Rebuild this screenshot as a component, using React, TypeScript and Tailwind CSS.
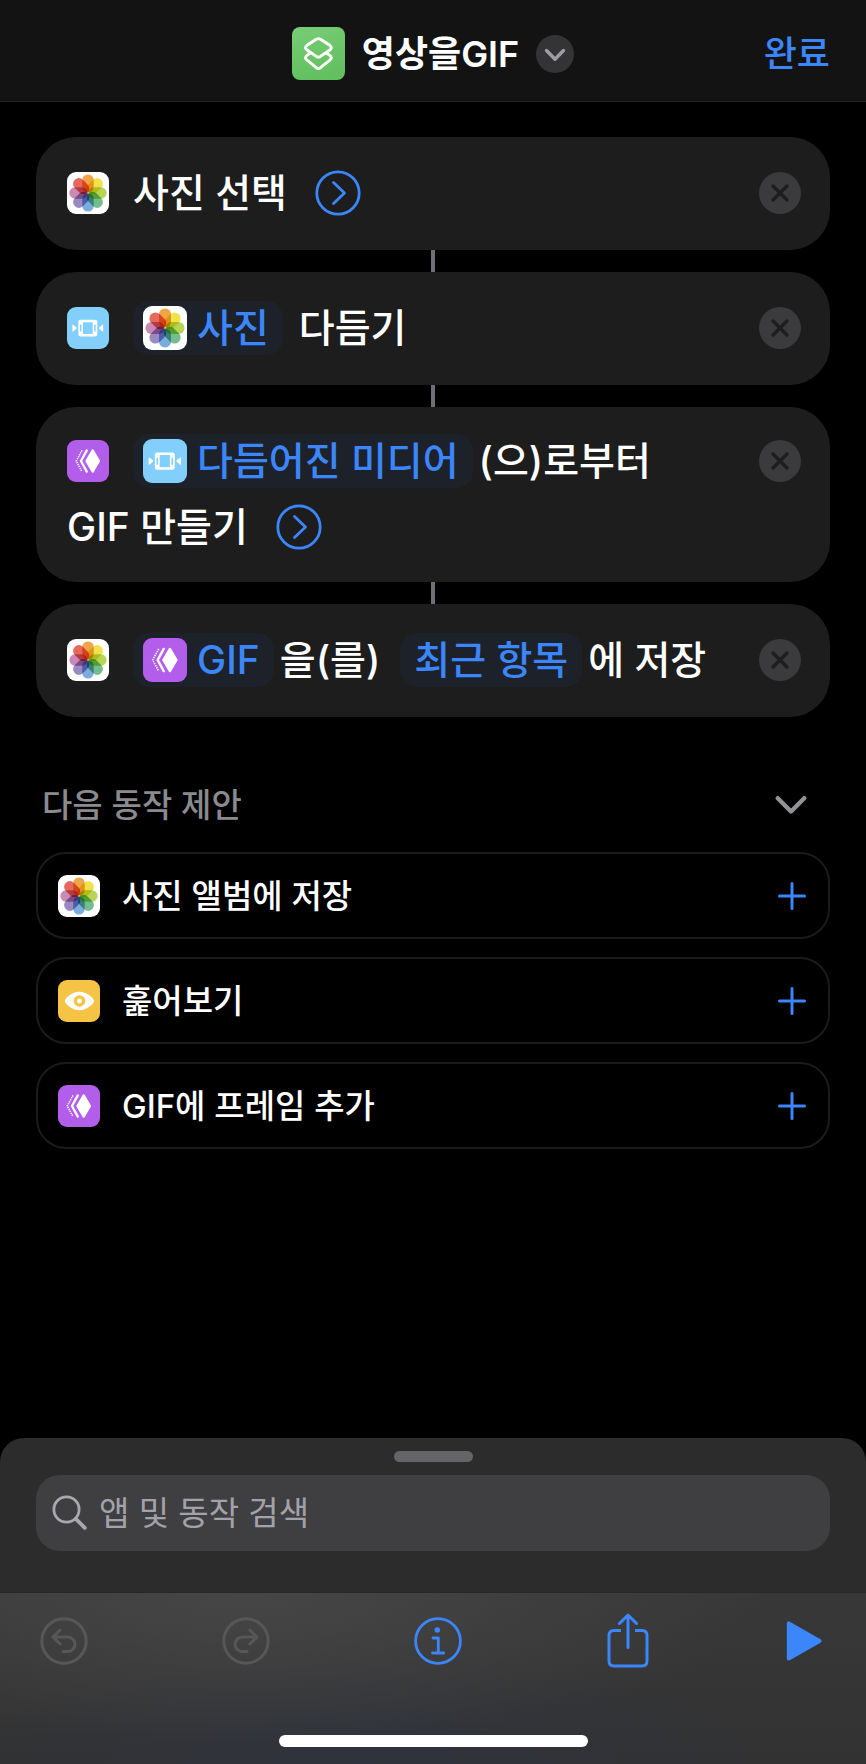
import { ReactNode } from 'react'
import clsx from 'clsx'

type IconName = 'photos' | 'trim' | 'gif' | 'eye'

const PETALS = [
  '#f0a548',
  '#f1e24c',
  '#b9d558',
  '#74bd8e',
  '#7aacdd',
  '#9b89c2',
  '#cb8ab6',
  '#e5695c',
]

const PhotosArt = () => (
  <svg viewBox="0 0 42 42" className="isolate size-full" aria-hidden="true">
    <rect width="42" height="42" fill="#fff" />
    {PETALS.map((color, i) => (
      <rect
        key={color}
        className="mix-blend-multiply"
        x="15.3"
        y="2.4"
        width="11.4"
        height="18"
        rx="5.5"
        fill={color}
        transform={`rotate(${i * 45} 21 21)`}
      />
    ))}
  </svg>
)

const TrimArt = () => (
  <svg viewBox="0 0 42 42" className="size-full" aria-hidden="true">
    <rect width="42" height="42" fill="#82cffc" />
    <rect x="11.3" y="12.8" width="19" height="16.6" rx="2.4" fill="#fff" />
    <rect x="15.9" y="15.3" width="9.8" height="11.6" fill="#82cffc" />
    <rect x="12.9" y="17.6" width="1.5" height="7" rx="0.6" fill="#82cffc" />
    <rect x="27.2" y="17.6" width="1.500" height="7" rx="0.6" fill="#82cffc" />
    <path d="M5.400 18.100v6q0 .8.700.4l3.300-2.700q.5-.7 0-1.400l-3.300-2.700q-.7-.4-.7.4z" fill="#fff" />
    <path d="M36.200 18.100v6q0 .8-.7.4l-3.300-2.700q-.5-.7 0-1.400l3.300-2.700q.7-.4.7.4z" fill="#fff" />
  </svg>
)

const GifArt = () => (
  <svg viewBox="0 0 42 42" className="size-full" aria-hidden="true">
    <rect width="42" height="42" fill="#b35eea" />
    <path
      d="M25.7 10.4 32 21l-6.3 10.6L19.4 21z"
      fill="#fff"
      stroke="#fff"
      strokeWidth="2.2"
      strokeLinejoin="round"
    />
    <path
      d="M19.8 10.4 14 21l5.8 10.6"
      fill="none"
      stroke="#fff"
      strokeWidth="2.3"
      strokeLinecap="round"
      strokeLinejoin="round"
    />
    <path
      d="M15 10.4 9.2 21 15 31.6"
      fill="none"
      stroke="#fff"
      strokeWidth="1.5"
      strokeDasharray="1.3 0.9"
    />
  </svg>
)

const EyeArt = () => (
  <svg viewBox="0 0 42 42" className="size-full" aria-hidden="true">
    <rect width="42" height="42" fill="#f6c445" />
    <path
      d="M6.8 21c0-1.6 6-9.200 14.600-9.200S36.200 19.400 36.200 21s-6.200 9.300-14.800 9.300S6.800 22.600 6.800 21z"
      fill="#fff"
    />
    <circle cx="21.5" cy="21" r="4.1" fill="#fff" stroke="#f6c445" strokeWidth="3.4" />
  </svg>
)

const ART: Record<IconName, ReactNode> = {
  photos: <PhotosArt />,
  trim: <TrimArt />,
  gif: <GifArt />,
  eye: <EyeArt />,
}

const AppIcon = ({ name, className }: { name: IconName; className?: string }) => (
  <span className={clsx('block shrink-0 overflow-hidden rounded-[9px]', className)}>
    {ART[name]}
  </span>
)

const Chip = ({ icon, children }: { icon?: IconName; children: ReactNode }) => (
  <button
    type="button"
    className={clsx(
      'mr-1.5 flex h-[54px] items-center rounded-2xl bg-[#1c212a] pr-3.5 text-[#3b86fb]',
      icon ? 'gap-2.5 pl-2.5' : 'pl-3.5',
    )}
  >
    {icon && <AppIcon name={icon} className="size-11" />}
    {children}
  </button>
)

const ExpandButton = () => (
  <button type="button" aria-label="더 보기" className="ml-7 text-[#3b86fb]">
    <svg
      viewBox="0 0 46 46"
      className="size-[46px]"
      fill="none"
      stroke="currentColor"
      strokeWidth="2.8"
      strokeLinecap="round"
      strokeLinejoin="round"
    >
      <circle cx="23" cy="23" r="21.2" />
      <path d="M18.5 12.5 29.5 23l-11 10.5" />
    </svg>
  </button>
)

const ActionCard = ({ icon, children }: { icon: IconName; children: ReactNode }) => (
  <li className="group">
    <div className="flex min-h-[113px] items-center rounded-[40px] bg-[#1d1d1d] pt-[21px] pr-[29px] pb-[22px] pl-[31px]">
      <div className="flex w-full items-start gap-10">
        <div className="flex min-w-0 flex-1 flex-wrap items-center text-[39px] leading-[66px] font-medium text-white">
          <AppIcon name={icon} className="mr-6 size-[42px]" />
          {children}
        </div>
        <button type="button" aria-label="삭제" className="flex h-[66px] items-center">
          <svg viewBox="0 0 42 42" className="size-[42px]">
            <circle cx="21" cy="21" r="21" fill="#3b3b3d" />
            <path
              d="m14 14 14 14M28 14 14 28"
              stroke="#1d1d1d"
              strokeWidth="3.4"
              strokeLinecap="round"
            />
          </svg>
        </button>
      </div>
    </div>
    <div className="mx-auto h-[22px] w-1 bg-[#706f77] group-last:hidden" />
  </li>
)

const suggestions: { icon: IconName; label: string }[] = [
  { icon: 'photos', label: '사진 앨범에 저장' },
  { icon: 'eye', label: '훑어보기' },
  { icon: 'gif', label: 'GIF에 프레임 추가' },
]

const Header = () => (
  <header className="grid h-[102px] grid-cols-[1fr_auto_1fr] items-center border-b border-[#202020] bg-[#131313] px-9 pt-1.5">
    <span />
    <div className="flex items-center">
      <svg viewBox="0 0 53 53" className="mr-[17px] size-[53px]" aria-hidden="true">
        <defs>
          <linearGradient id="tile" x1="0" y1="0" x2="0.3" y2="1">
            <stop offset="0" stopColor="#78cd76" />
            <stop offset="1" stopColor="#63c060" />
          </linearGradient>
        </defs>
        <rect width="53" height="53" rx="8" fill="url(#tile)" />
        <g fill="none" stroke="#fff" strokeWidth="2.9" strokeLinejoin="round" strokeLinecap="round">
          <path d="M24.3 12.300q2.100-1.300 4.200 0l9.300 6q3 2.300 0 4.700l-9.300 6.400q-2.100 1.300-4.200 0L15 23q-3-2.400 0-4.700z" />
          <path d="M18.300 26 15 28.400q-3 2.400 0 4.700l9.300 7.600q2.100 1.500 4.200 0l9.300-7.600q3-2.300 0-4.700L34.500 26" />
        </g>
      </svg>
      <h1 className="text-[36px] leading-[48px] font-semibold text-white">영상을GIF</h1>
      <button type="button" aria-label="메뉴" className="ml-[17px]">
        <svg viewBox="0 0 38 38" className="size-[38px]">
          <circle cx="19" cy="19" r="19" fill="#343436" />
          <path
            d="m10.500 15.500 8.500 8.800 8.500-8.800"
            fill="none"
            stroke="#9c9ca3"
            strokeWidth="3.4"
            strokeLinecap="round"
            strokeLinejoin="round"
          />
        </svg>
      </button>
    </div>
    <button type="button" className="justify-self-end text-[36px] leading-[48px] font-medium text-[#3b86fb]">
      완료
    </button>
  </header>
)

const Toolbar = () => (
  <nav className="flex items-center justify-between pt-5 pr-[43px] pl-10 text-[#3b86fb]">
    <button type="button" disabled aria-label="실행 취소" className="text-[#575758]">
      <svg viewBox="0 0 48 48" className="size-12" fill="none" stroke="currentColor" strokeWidth="3" strokeLinecap="round" strokeLinejoin="round">
        <circle cx="24" cy="24" r="22.2" />
        <path d="M20.200 13 13 20l7.200 7M13.500 20h14a7.500 7.300 0 0 1 0 14.600h-4.500" />
      </svg>
    </button>
    <button type="button" disabled aria-label="실행 복귀" className="text-[#575758]">
      <svg viewBox="0 0 48 48" className="size-12" fill="none" stroke="currentColor" strokeWidth="3" strokeLinecap="round" strokeLinejoin="round">
        <circle cx="24" cy="24" r="22.2" />
        <path d="M27.800 13 35 20l-7.200 7M34.500 20h-14a7.500 7.300 0 0 0 0 14.600H25" />
      </svg>
    </button>
    <button type="button" aria-label="정보" className="flex w-[68px] justify-center">
      <svg viewBox="0 0 48 48" className="size-12" fill="none" stroke="currentColor" strokeWidth="2.8" strokeLinecap="round" strokeLinejoin="round">
        <circle cx="24" cy="24" r="22.4" />
        <circle cx="23.3" cy="13" r="2.8" fill="currentColor" stroke="none" />
        <path d="M19 21h5.300v15M18.500 36h11.200" />
      </svg>
    </button>
    <button type="button" aria-label="공유" className="flex w-[46px] justify-center">
      <svg viewBox="0 0 42 56" className="h-14 w-[42px]" fill="none" stroke="currentColor" strokeWidth="3" strokeLinecap="round" strokeLinejoin="round">
        <path d="M14 17.500H7Q2 17.500 2 22.500v25.500q0 5 5 5h28q5 0 5-5V22.500Q40 17.500 35 17.500h-7" strokeLinecap="butt" />
        <path d="M21 34.500V3M12.500 10.500 21 2l8.500 8.500" />
      </svg>
    </button>
    <button type="button" aria-label="실행" className="flex w-[38px] justify-center">
      <svg viewBox="0 0 36 42" className="h-[42px] w-9" fill="currentColor" stroke="currentColor" strokeWidth="4" strokeLinejoin="round">
        <path d="M2.800 3.400v35.200L33.500 21z" />
      </svg>
    </button>
  </nav>
)

export default function App() {
  return (
    <div className="flex min-h-screen flex-col bg-black font-['Inter','Noto_Sans_CJK_KR',sans-serif]">
      <Header />

      <main className="px-9 pt-[35px] pb-10">
        <ul>
          <ActionCard icon="photos">
            <span>사진 선택</span>
            <ExpandButton />
          </ActionCard>
          <ActionCard icon="trim">
            <Chip icon="photos">사진</Chip>
            <span className="ml-2.5">다듬기</span>
          </ActionCard>
          <ActionCard icon="gif">
            <Chip icon="trim">다듬어진 미디어</Chip>
            <span>(으)로부터</span>
            <span>GIF 만들기</span>
            <ExpandButton />
          </ActionCard>
          <ActionCard icon="photos">
            <Chip icon="gif">GIF</Chip>
            <span className="mr-5">을(를)</span>
            <Chip>최근 항목</Chip>
            <span>에 저장</span>
          </ActionCard>
        </ul>

        <section className="mt-16">
          <div className="mb-[23px] flex h-12 items-center justify-between pr-[23px] pl-1.5">
            <h2 className="text-[33px] leading-[48px] font-medium text-[#8a8a8f]">다음 동작 제안</h2>
            <button type="button" aria-label="접기">
              <svg viewBox="0 0 32 20" className="h-5 w-8" fill="none" stroke="#939397" strokeWidth="4.4" strokeLinecap="round" strokeLinejoin="round">
                <path d="M2.800 3.200 16 16.500 29.200 3.200" />
              </svg>
            </button>
          </div>
          <ul className="flex flex-col gap-[18px]">
            {suggestions.map((item) => (
              <li key={item.label}>
                <button
                  type="button"
                  className="flex h-[87px] w-full items-center rounded-[30px] border-2 border-[#1b1b1b] pr-[22px] pl-5 text-left"
                >
                  <AppIcon name={item.icon} className="mr-[22px] size-[42px]" />
                  <span className="flex-1 text-[33px] leading-[48px] font-medium text-white">{item.label}</span>
                  <svg viewBox="0 0 28 28" className="size-7" stroke="#3b86fb" strokeWidth="3" strokeLinecap="round">
                    <path d="M14 1.500v25M1.500 14h25" />
                  </svg>
                </button>
              </li>
            ))}
          </ul>
        </section>
      </main>

      <footer className="mt-auto">
        <div className="rounded-t-[24px] bg-[#2c2c2c] px-9 pt-[13px] pb-[41px]">
          <div className="mx-auto mb-[13px] h-[11px] w-[79px] rounded-full bg-[#656469]" />
          <label className="flex h-[76px] items-center gap-[11px] rounded-[24px] bg-[#3f3f41] px-4">
            <svg viewBox="0 0 36 36" className="size-9 shrink-0" fill="none" stroke="#a9a8b0" strokeLinecap="round">
              <circle cx="14.5" cy="14.5" r="12.6" strokeWidth="2.8" />
              <path d="m23.800 23.800 9 9" strokeWidth="3.8" />
            </svg>
            <input
              type="search"
              aria-label="앱 및 동작 검색"
              placeholder="앱 및 동작 검색"
              className="h-12 min-w-0 flex-1 bg-transparent text-[33px] leading-[48px] text-white outline-none placeholder:text-[#a3a2aa]"
            />
          </label>
        </div>
        <div className="h-[172px] border-t border-[#282828] bg-[radial-gradient(ellipse_60%_90%_at_28%_0%,#464647_0%,transparent_100%),radial-gradient(ellipse_50%_60%_at_42%_100%,#2f333d_0%,transparent_100%),linear-gradient(to_bottom,#383839,#323232)]">
          <Toolbar />
          <div className="mx-auto mt-[66px] h-3 w-[309px] rounded-full bg-white" />
        </div>
      </footer>
    </div>
  )
}
